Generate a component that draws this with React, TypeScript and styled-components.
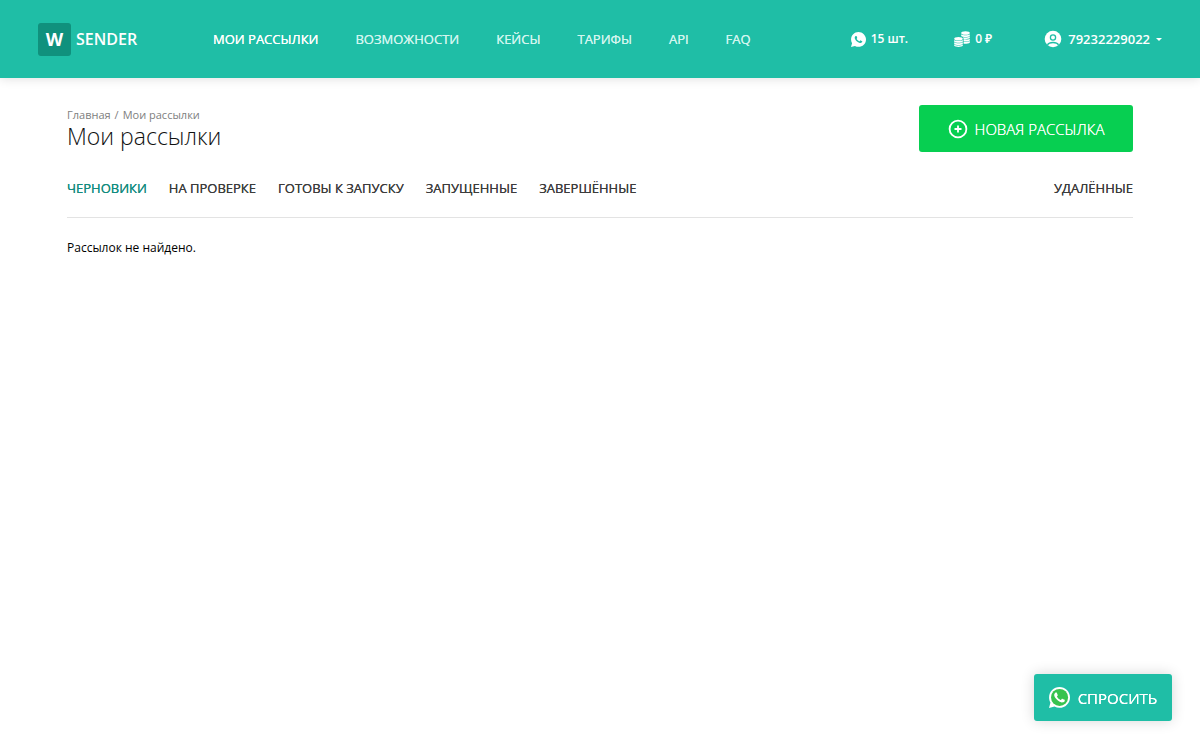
import React from "react";
import styled, { createGlobalStyle, css } from "styled-components";

const GlobalStyle = createGlobalStyle`
  *, *::before, *::after { box-sizing: border-box; }
  body {
    margin: 0;
    background: #fff;
    color: #111;
    font-family: "Open Sans", "Noto Sans", sans-serif;
    font-size: 13px;
    line-height: 20px;
  }
  a { color: inherit; text-decoration: none; }
  button { font: inherit; border: 0; margin: 0; padding: 0; cursor: pointer; background: none; color: inherit; }
`;

/* Half-step emphasis between two of the family's weights. */
const firm = css`
  text-shadow: 0 0 currentColor;
`;

const Header = styled.header`
  display: flex;
  align-items: center;
  min-height: 78px;
  padding: 0 38px;
  background: #1fbea6;
  color: #fff;
  font-weight: 600;
  white-space: nowrap;
  box-shadow: 0 1px 10px rgba(0, 0, 0, 0.12);
`;

const Logo = styled.a`
  display: flex;
  align-items: center;
  gap: 5px;
  width: 175px;
  font-size: 16px;
`;

const LogoMark = styled.span`
  display: grid;
  place-items: center;
  width: 33px;
  height: 33px;
  border-radius: 3px;
  background: #10917d;
  font-size: 18px;
  font-weight: 700;
`;

const Nav = styled.nav`
  display: flex;
  flex: 1;
  gap: 37px;
`;

const NavLink = styled.a<{ $active?: boolean }>`
  color: ${(p) => (p.$active ? "#fff" : "#d2f5ee")};
  font-weight: 400;
  ${firm}
`;

const Account = styled.div`
  display: flex;
  align-items: center;
  gap: 46px;
`;

const AccountLink = styled.a`
  display: flex;
  align-items: center;
  gap: 5px;
  font-size: 12px;
`;

const AccountMenu = styled.button`
  display: flex;
  align-items: center;
  gap: 6px;
  margin-left: 6px;
`;

const Main = styled.main`
  padding: 27px 67px;
`;

const TitleRow = styled.div`
  display: flex;
  justify-content: space-between;
  align-items: flex-start;
`;

const Breadcrumbs = styled.nav`
  display: flex;
  gap: 4px;
  padding-top: 2px;
  color: #808080;
  font-size: 11px;
  line-height: 16px;
`;

const Title = styled.h1`
  margin: 0;
  font-size: 23px;
  font-weight: 300;
  line-height: 26px;
`;

const NewButton = styled.button`
  display: flex;
  align-items: center;
  justify-content: center;
  gap: 7px;
  width: 214px;
  height: 47px;
  border-radius: 3px;
  background: #07cf51;
  color: #fff;
  font-size: 15px;
  font-weight: 300;
  ${firm}
`;

const Tabs = styled.nav`
  display: flex;
  gap: 22px;
  margin-top: 26px;
  padding-bottom: 19px;
  border-bottom: 1px solid #e3e3e3;
  color: #3c3c3c;
  ${firm}
`;

const Tab = styled.a<{ $active?: boolean; $end?: boolean }>`
  color: ${(p) => (p.$active ? "#128c7e" : "#3c3c3c")};
  margin-left: ${(p) => (p.$end ? "auto" : "0")};
  ${firm}
`;

const Empty = styled.p`
  margin: 20px 0 0;
  color: #000;
  font-size: 12px;
`;

const AskButton = styled.button`
  position: fixed;
  right: 28px;
  bottom: 28px;
  display: flex;
  align-items: center;
  justify-content: center;
  gap: 8px;
  width: 138px;
  height: 47px;
  border-radius: 3px;
  background: #1fbea6;
  color: #fff;
  font-size: 15px;
  box-shadow: 0 0 14px rgba(0, 0, 0, 0.16);
  ${firm}
`;

const PHONE =
  "M325.1 300.5c-5.5-2.8-32.8-16.2-37.9-18-5.1-1.9-8.8-2.8-12.5 2.8-3.7 5.6-14.3 18-17.6 21.8-3.2 3.7-6.5 4.2-12 1.4-32.6-16.3-54-29.1-75.5-66-5.7-9.8 5.7-9.1 16.3-30.3 1.8-3.7.9-6.9-.5-9.7-1.4-2.8-12.5-30.1-17.1-41.2-4.5-10.8-9.1-9.3-12.5-9.5-3.2-.2-6.9-.2-10.6-.2-3.7 0-9.7 1.4-14.8 6.9-5.1 5.6-19.4 19-19.4 46.3 0 27.3 19.9 53.7 22.6 57.4 2.8 3.7 39.1 59.7 94.8 83.8 35.2 15.2 49 16.5 66.6 13.9 10.7-1.6 32.8-13.4 37.4-26.4 4.6-13 4.6-24.1 3.2-26.4-1.3-2.5-5-3.9-10.5-6.6z";
const BUBBLE =
  "M380.9 97.1C339 55.1 283.2 32 223.9 32c-122.4 0-222 99.6-222 222 0 39.1 10.2 77.3 29.6 111L0 480l117.7-30.9c32.4 17.7 68.9 27 106.1 27h.1c122.3 0 224.1-99.6 224.1-222 0-59.3-25.2-115-67.1-157z";

const WhatsAppIcon = ({ size, phone, fill }: { size: number; phone: string; fill: string }) => (
  <svg width={size} height={size} viewBox="0 32 448 448" aria-hidden="true">
    <path d={BUBBLE} fill="#fff" />
    <circle cx="225" cy="254" r="182" fill={fill} />
    <path d={PHONE} fill={phone} />
  </svg>
);

const CoinsIcon = () => (
  <svg width="16" height="16" viewBox="0 0 16 16" fill="#fff" aria-hidden="true">
    <ellipse cx="11.5" cy="2" rx="4.3" ry="1.8" />
    <path d="M7.2 3.2c1.6 1.4 7 1.4 8.6 0v1.7c-1.4 1.5-7.2 1.5-8.6 0zM9 6.2c2 .5 5.4.2 6.8-.8v1.700c-1 .9-3.700 1.300-6 1.100zM9.600 8.600c2 .1 5-.1 6.200-.900v1.700c-1 .9-4 1.300-6.200 1.100zM9.600 11c2 .1 5-.1 6.200-.900v1.600c-1 .9-4 1.300-6.200 1.100z" />
    <ellipse cx="4.500" cy="7.800" rx="4.300" ry="1.800" />
    <path d="M.2 9c1.600 1.400 7 1.400 8.600 0v1.700c-1.400 1.500-7.200 1.500-8.600 0zM.2 11.300c1.600 1.400 7 1.400 8.600 0v1.700c-1.400 1.500-7.200 1.500-8.600 0zM.2 13.600c1.600 1.400 7 1.400 8.600 0v1.200c-1.400 1.500-7.200 1.500-8.600 0z" />
  </svg>
);

const UserIcon = () => (
  <svg width="18" height="18" viewBox="0 0 18 18" aria-hidden="true">
    <circle cx="9" cy="9" r="8.300" fill="#fff" />
    <circle cx="9" cy="7.500" r="2.600" fill="none" stroke="#1fbea6" strokeWidth="1.300" />
    <path d="M3.400 14.800c1.200-1.900 3.300-2.300 5.600-2.300s4.400.4 5.600 2.300" fill="none" stroke="#1fbea6" strokeWidth="1.300" />
  </svg>
);

const CaretIcon = () => (
  <svg width="6" height="3" viewBox="0 0 6 3" fill="#fff" aria-hidden="true">
    <path d="M0 0h6L3 3z" />
  </svg>
);

const PlusIcon = () => (
  <svg width="20" height="20" viewBox="0 0 20 20" fill="none" stroke="#fff" strokeWidth="1.800" aria-hidden="true">
    <circle cx="10" cy="10" r="8.400" />
    <path d="M10 6.500v7M6.500 10h7" />
  </svg>
);

const NAV = ["МОИ РАССЫЛКИ", "ВОЗМОЖНОСТИ", "КЕЙСЫ", "ТАРИФЫ", "API", "FAQ"];
const TABS = ["ЧЕРНОВИКИ", "НА ПРОВЕРКЕ", "ГОТОВЫ К ЗАПУСКУ", "ЗАПУЩЕННЫЕ", "ЗАВЕРШЁННЫЕ"];

export default function App() {
  return (
    <>
      <GlobalStyle />
      <Header>
        <Logo href="#">
          <LogoMark>W</LogoMark>
          SENDER
        </Logo>
        <Nav>
          {NAV.map((label, i) => (
            <NavLink key={label} href="#" $active={i === 0}>
              {label}
            </NavLink>
          ))}
        </Nav>
        <Account>
          <AccountLink href="#">
            <WhatsAppIcon size={15} fill="#fff" phone="#1fbea6" />
            15 шт.
          </AccountLink>
          <AccountLink href="#">
            <CoinsIcon />0 ₽
          </AccountLink>
          <AccountMenu type="button">
            <UserIcon />
            79232229022
            <CaretIcon />
          </AccountMenu>
        </Account>
      </Header>
      <Main>
        <TitleRow>
          <div>
            <Breadcrumbs>
              <a href="#">Главная</a>
              <span>/</span>
              <span>Мои рассылки</span>
            </Breadcrumbs>
            <Title>Мои рассылки</Title>
          </div>
          <NewButton type="button">
            <PlusIcon />
            НОВАЯ РАССЫЛКА
          </NewButton>
        </TitleRow>
        <Tabs>
          {TABS.map((label, i) => (
            <Tab key={label} href="#" $active={i === 0}>
              {label}
            </Tab>
          ))}
          <Tab href="#" $end>
            УДАЛЁННЫЕ
          </Tab>
        </Tabs>
        <Empty>Рассылок не найдено.</Empty>
      </Main>
      <AskButton type="button">
        <WhatsAppIcon size={21} fill="#37c34f" phone="#fff" />
        СПРОСИТЬ
      </AskButton>
    </>
  );
}
